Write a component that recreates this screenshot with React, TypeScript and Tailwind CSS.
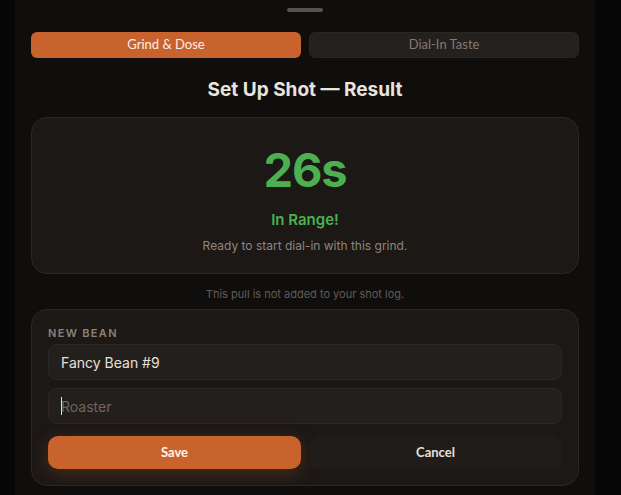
export default function App() {
  const dm = { fontFamily: 'Inter, "Noto Sans", sans-serif' } as const;
  const ub = { fontFamily: 'Lato, "Noto Sans", sans-serif' } as const;
  return (
    <div className="w-[621px] h-[495px] bg-[#060606] flex overflow-hidden" style={dm}>
      <div className="ml-[15px] w-[580px] h-full bg-[#0f0e0d] flex flex-col px-4">
        <div className="flex justify-center pt-2">
          <div className="w-[36px] h-[4px] rounded-full bg-[#5a534d]" />
        </div>
        <div className="mt-5 grid grid-cols-2 gap-2">
          <div className="h-[26px] rounded-md bg-[#c9632d] flex items-center justify-center text-[13px] text-[#fbeee4]" style={ub}>
            Grind &amp; Dose
          </div>
          <div className="h-[26px] rounded-md bg-[#24201d] border border-[#2a2623] flex items-center justify-center text-[13px] text-[#857b73]" style={ub}>
            Dial-In Taste
          </div>
        </div>
        <div className="mt-[20px] text-center text-[19px] font-bold text-[#ebe3db] leading-[24px]">
          Set Up Shot — Result
        </div>
        <div className="mt-[15px] h-[157px] rounded-2xl bg-[#1b1816] border border-[#2b2724] flex flex-col items-center">
          <div className="mt-[24px] text-[47px] font-bold leading-[56px] text-[#4cb050] tracking-tight">26s</div>
          <div className="mt-[12px] text-[15px] font-semibold leading-[20px] text-[#4cb050]">In Range!</div>
          <div className="mt-[8px] text-[12px] leading-[16px] text-[#8f867e]">Ready to start dial-in with this grind.</div>
        </div>
        <div className="mt-[13px] text-center text-[11px] leading-[14px] text-[#625b55]">
          This pull is not added to your shot log.
        </div>
        <div className="mt-[8px] h-[177px] rounded-2xl bg-[#1b1816] border border-[#2b2724] px-4 pt-[17px] flex flex-col">
          <div className="text-[11px] font-semibold tracking-[0.12em] text-[#8a817a] leading-[13px]">NEW BEAN</div>
          <div className="mt-[4px] h-[36px] rounded-lg bg-[#231f1c] border border-[#2b2724] flex items-center px-3 text-[14px] text-[#e8e0d8]">
            Fancy Bean #9
          </div>
          <div className="mt-[8px] h-[36px] rounded-lg bg-[#231f1c] border border-[#2b2724] flex items-center px-3 text-[14px] text-[#6e665f]">
            <span className="w-px h-[18px] bg-[#e8e0d8] -mr-px" />
            Roaster
          </div>
          <div className="mt-[12px] grid grid-cols-2 gap-2">
            <div className="h-[33px] rounded-[10px] bg-[#c9632d] flex items-center justify-center text-[13px] font-bold text-[#fff4ec] shadow-[0_4px_18px_rgba(201,99,45,0.28)]" style={ub}>
              Save
            </div>
            <div className="h-[33px] rounded-[10px] bg-[#1f1c19] flex items-center justify-center text-[13px] font-bold text-[#e8e0d8]" style={ub}>
              Cancel
            </div>
          </div>
        </div>
      </div>
    </div>
  );
}
